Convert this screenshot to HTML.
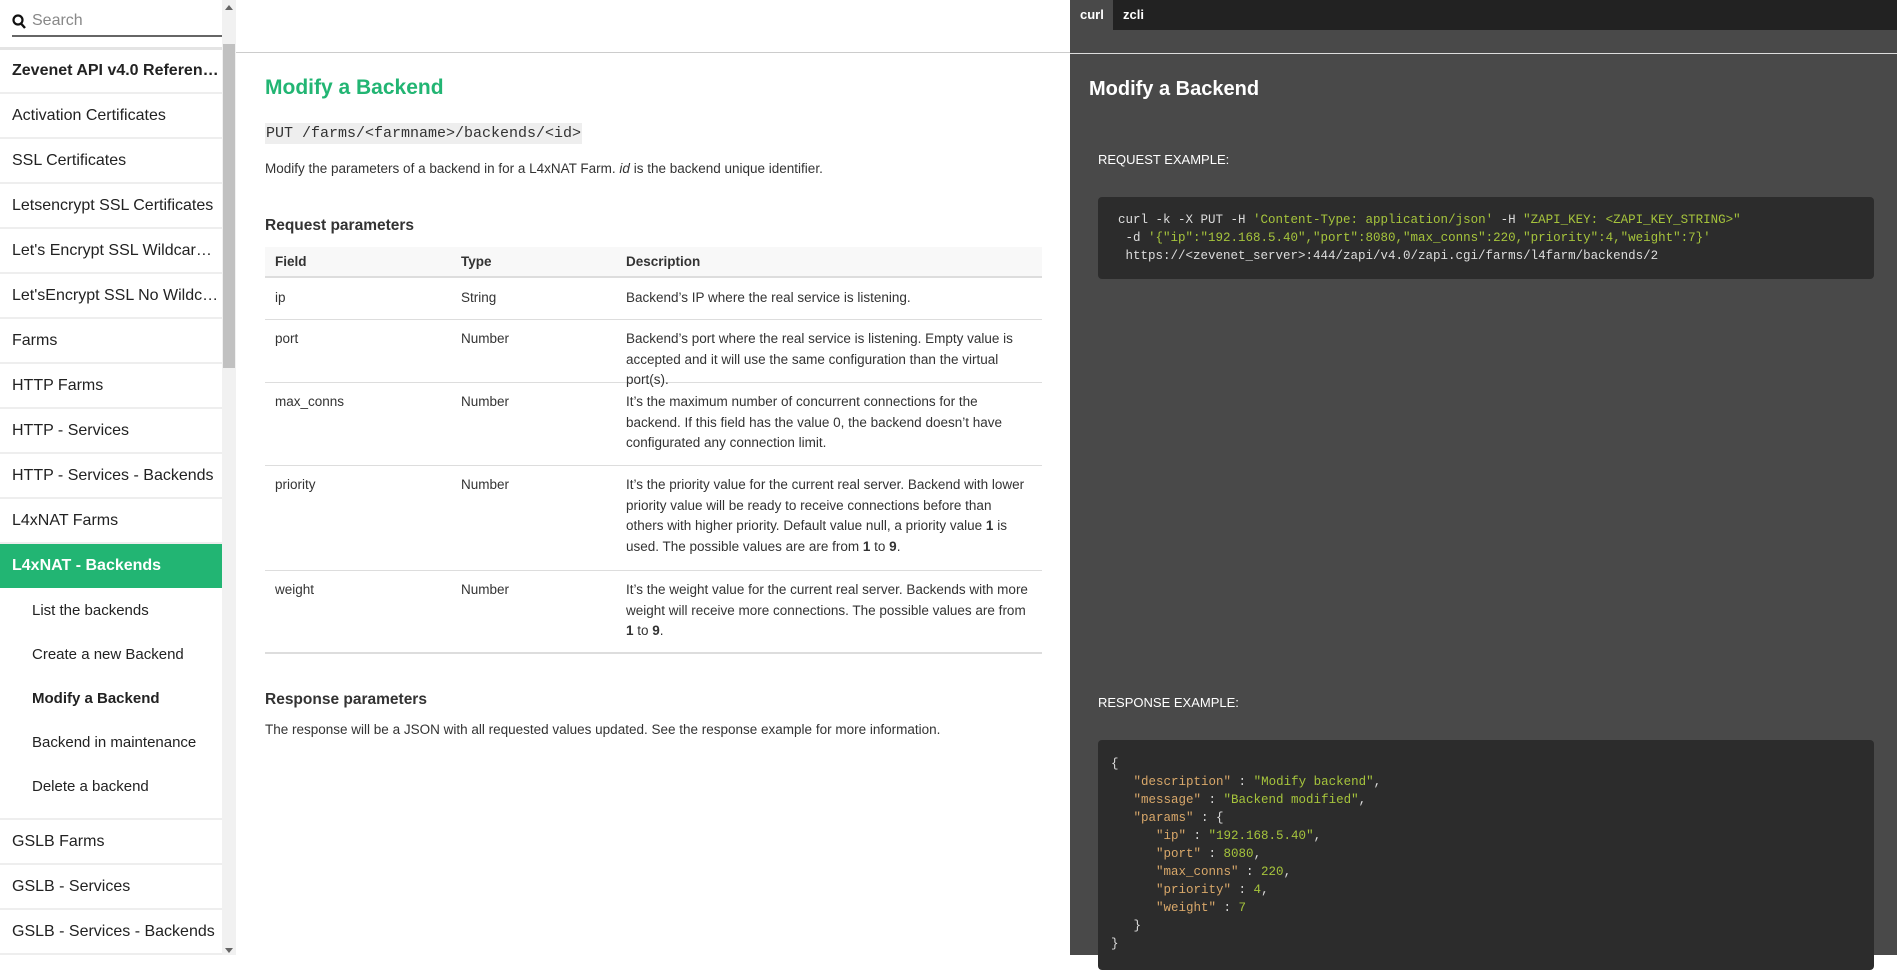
<!DOCTYPE html>
<html><head><meta charset="utf-8"><style>
*{margin:0;padding:0;box-sizing:border-box}
body{width:1897px;height:955px;overflow:hidden;font-family:"Liberation Sans",sans-serif;color:#333;background:#fff;position:relative}
.abs{position:absolute}
#side{left:0;top:0;width:222px;height:955px;background:#fff;overflow:hidden}
.it{position:absolute;left:0;width:222px;height:45px;border-bottom:2px solid #eee;font-size:16px;color:#222;padding-left:12px;line-height:43px;white-space:nowrap}
.sub{position:absolute;left:32px;font-size:15px;color:#222;white-space:nowrap}
#sb{left:222px;top:0;width:14px;height:955px;background:#f1f1f1}
#main{left:236px;top:0;width:834px;height:955px}
.mono{font-family:"Liberation Mono",monospace}
table{border-collapse:collapse}
#right{left:1070px;top:0;width:827px;height:955px;background:#494949}
.box{background:#2c2c2c;border-radius:4px;position:absolute;font-family:"Liberation Mono",monospace;font-size:12.5px;color:#ddd;white-space:pre}
.s{color:#a6c43c}.k{color:#d9a86a}
.row{position:absolute;left:265px;width:777px;border-bottom:1px solid #ddd;font-size:13.5px}
.c{position:absolute;line-height:20.5px}
</style></head><body>
<div id="side" class="abs">
 <svg class="abs" style="left:12px;top:14px" width="14" height="15" viewBox="0 0 14 15"><circle cx="6" cy="6" r="4.5" fill="none" stroke="#111" stroke-width="2.2"/><line x1="9" y1="9.5" x2="13" y2="14" stroke="#111" stroke-width="2.4"/></svg>
 <div class="abs" style="left:32px;top:12px;font-size:16px;color:#888">Search</div>
 <div class="abs" style="left:12px;top:35px;width:210px;height:2px;background:#666"></div>
 <div class="abs" style="left:0;top:47px;width:222px;height:3px;background:#e4e4e4"></div>
 <div class="it" style="top:49px;font-weight:bold">Zevenet API v4.0 Referen…</div>
 <div class="it" style="top:94px">Activation Certificates</div>
 <div class="it" style="top:139px">SSL Certificates</div>
 <div class="it" style="top:184px">Letsencrypt SSL Certificates</div>
 <div class="it" style="top:229px">Let's Encrypt SSL Wildcar…</div>
 <div class="it" style="top:274px">Let'sEncrypt SSL No Wildc…</div>
 <div class="it" style="top:319px">Farms</div>
 <div class="it" style="top:364px">HTTP Farms</div>
 <div class="it" style="top:409px">HTTP - Services</div>
 <div class="it" style="top:454px">HTTP - Services - Backends</div>
 <div class="it" style="top:499px">L4xNAT Farms</div>
 <div class="it" style="top:544px;background:#22b573;color:#fff;font-weight:bold;border-bottom:none;height:44px">L4xNAT - Backends</div>
 <div class="sub" style="top:602px">List the backends</div>
 <div class="sub" style="top:646px">Create a new Backend</div>
 <div class="sub" style="top:690px;font-weight:bold">Modify a Backend</div>
 <div class="sub" style="top:734px">Backend in maintenance</div>
 <div class="sub" style="top:778px">Delete a backend</div>
 <div class="abs" style="left:0;top:818px;width:222px;height:2px;background:#eee"></div>
 <div class="it" style="top:820px">GSLB Farms</div>
 <div class="it" style="top:865px">GSLB - Services</div>
 <div class="it" style="top:910px">GSLB - Services - Backends</div>
</div>
<div id="sb" class="abs">
 <div class="abs" style="left:3px;top:5px;width:0;height:0;border-left:4px solid transparent;border-right:4px solid transparent;border-bottom:5px solid #666"></div>
 <div class="abs" style="left:1px;top:44px;width:12px;height:324px;background:#c1c1c1"></div>
 <div class="abs" style="left:3px;top:948px;width:0;height:0;border-left:4px solid transparent;border-right:4px solid transparent;border-top:5px solid #666"></div>
</div>
<div class="abs" style="left:236px;top:52px;width:834px;height:1px;background:#ccc"></div>
<div class="abs" style="left:265px;top:76px;font-size:21px;font-weight:bold;color:#22b573">Modify a Backend</div>
<div class="abs mono" style="left:265px;top:123px;background:#eee;padding:2px 1px;font-size:15px;color:#333">PUT /farms/&lt;farmname&gt;/backends/&lt;id&gt;</div>
<div class="abs" style="left:265px;top:161px;font-size:13.5px">Modify the parameters of a backend in for a L4xNAT Farm. <i>id</i> is the backend unique identifier.</div>
<div class="abs" style="left:265px;top:217px;font-size:15.5px;font-weight:bold">Request parameters</div>
<div class="row" style="top:247px;height:31px;background:#f8f8f8;border-bottom:2px solid #ddd;font-weight:bold">
 <div class="c" style="left:10px;top:5px">Field</div><div class="c" style="left:196px;top:5px">Type</div><div class="c" style="left:361px;top:5px">Description</div></div>
<div class="row" style="top:278px;height:42px">
 <div class="c" style="left:10px;top:10px">ip</div><div class="c" style="left:196px;top:10px">String</div><div class="c" style="left:361px;top:10px">Backend’s IP where the real service is listening.</div></div>
<div class="row" style="top:320px;height:63px">
 <div class="c" style="left:10px;top:9px">port</div><div class="c" style="left:196px;top:9px">Number</div><div class="c" style="left:361px;top:9px;width:410px">Backend’s port where the real service is listening. Empty value is accepted and it will use the same configuration than the virtual port(s).</div></div>
<div class="row" style="top:383px;height:83px">
 <div class="c" style="left:10px;top:9px">max_conns</div><div class="c" style="left:196px;top:9px">Number</div><div class="c" style="left:361px;top:9px;width:410px">It’s the maximum number of concurrent connections for the backend. If this field has the value 0, the backend doesn’t have configurated any connection limit.</div></div>
<div class="row" style="top:466px;height:105px">
 <div class="c" style="left:10px;top:9px">priority</div><div class="c" style="left:196px;top:9px">Number</div><div class="c" style="left:361px;top:9px;width:405px">It’s the priority value for the current real server. Backend with lower priority value will be ready to receive connections before than others with higher priority. Default value null, a priority value <b>1</b> is used. The possible values are are from <b>1</b> to <b>9</b>.</div></div>
<div class="row" style="top:571px;height:83px;border-bottom:2px solid #ddd">
 <div class="c" style="left:10px;top:9px">weight</div><div class="c" style="left:196px;top:9px">Number</div><div class="c" style="left:361px;top:9px;width:410px">It’s the weight value for the current real server. Backends with more weight will receive more connections. The possible values are from <b>1</b> to <b>9</b>.</div></div>
<div class="abs" style="left:265px;top:691px;font-size:15.5px;font-weight:bold">Response parameters</div>
<div class="abs" style="left:265px;top:722px;font-size:13.5px">The response will be a JSON with all requested values updated. See the response example for more information.</div>

<div id="right" class="abs">
 <div class="abs" style="left:0;top:0;width:827px;height:30px;background:#222"></div>
 <div class="abs" style="left:0;top:0;width:43px;height:30px;background:#494949;color:#fff;font-size:13px;font-weight:bold;padding:7px 0 0 10px">curl</div>
 <div class="abs" style="left:53px;top:7px;color:#fff;font-size:13px;font-weight:bold">zcli</div>
 <div class="abs" style="left:0;top:53px;width:827px;height:1px;background:#ddd"></div>
 <div class="abs" style="left:19px;top:78px;font-size:20px;font-weight:bold;color:#fff">Modify a Backend</div>
 <div class="abs" style="left:28px;top:152px;font-size:13px;color:#fff">REQUEST EXAMPLE:</div>
 <div class="box" style="left:28px;top:197px;width:776px;height:82px;padding:14px 0 0 20px;line-height:18px">curl -k -X PUT -H <span class="s">'Content-Type: application/json'</span> -H <span class="s">"ZAPI_KEY: &lt;ZAPI_KEY_STRING&gt;"</span>
 -d <span class="s">'{"ip":"192.168.5.40","port":8080,"max_conns":220,"priority":4,"weight":7}'</span>
 https://&lt;zevenet_server&gt;:444/zapi/v4.0/zapi.cgi/farms/l4farm/backends/2</div>
 <div class="abs" style="left:28px;top:695px;font-size:13px;color:#fff">RESPONSE EXAMPLE:</div>
 <div class="box" style="left:28px;top:740px;width:776px;height:230px;padding:15px 0 0 13px;line-height:18px">{
   <span class="k">"description"</span> : <span class="s">"Modify backend"</span>,
   <span class="k">"message"</span> : <span class="s">"Backend modified"</span>,
   <span class="k">"params"</span> : {
      <span class="k">"ip"</span> : <span class="s">"192.168.5.40"</span>,
      <span class="k">"port"</span> : <span class="s">8080</span>,
      <span class="k">"max_conns"</span> : <span class="s">220</span>,
      <span class="k">"priority"</span> : <span class="s">4</span>,
      <span class="k">"weight"</span> : <span class="s">7</span>
   }
}</div>
</div>
</body></html>
